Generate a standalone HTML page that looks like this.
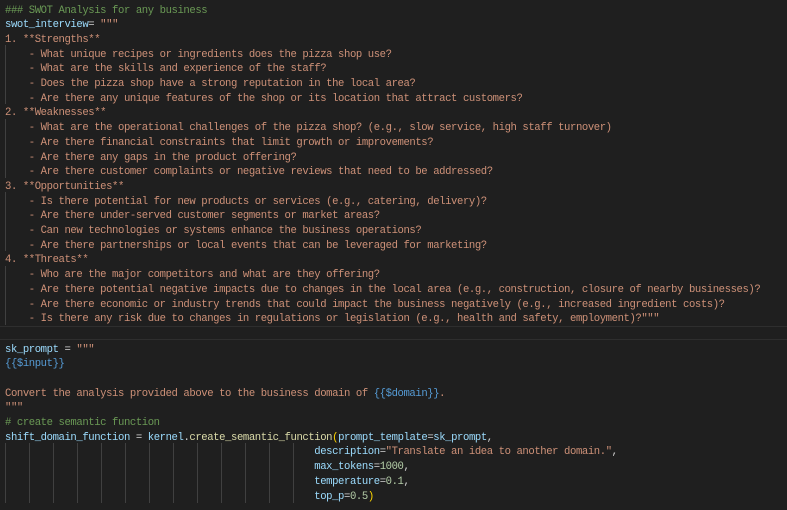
<!DOCTYPE html>
<html><head><meta charset="utf-8"><style>
body{margin:0;width:787px;height:510px;background:#1f1f1f;overflow:hidden;position:relative;font-family:"Liberation Mono",monospace;font-size:10.6px;letter-spacing:-0.41px}
.l{position:absolute;left:5px;white-space:pre;height:14px;line-height:14px;color:#ce9178;margin-top:1.5px}
.c{color:#6a9955}.v{color:#9cdcfe}.w{color:#d4d4d4}.b{color:#569cd6}.y{color:#ffd700}.f{color:#dcdcaa}.n{color:#b5cea8}
.g{position:absolute;width:1px;background:#404040}
.h{position:absolute;left:0;width:787px;height:1px;background:#2e2e2e}
</style></head><body>
<div class="h" style="top:326px"></div>
<div class="h" style="top:339px"></div>
<div class="g" style="left:5px;top:45px;height:59px"></div>
<div class="g" style="left:5px;top:119px;height:59px"></div>
<div class="g" style="left:5px;top:192px;height:59px"></div>
<div class="g" style="left:5px;top:266px;height:59px"></div>
<div class="g" style="left:5px;top:443px;height:60px"></div>
<div class="g" style="left:29px;top:443px;height:60px"></div>
<div class="g" style="left:53px;top:443px;height:60px"></div>
<div class="g" style="left:77px;top:443px;height:60px"></div>
<div class="g" style="left:101px;top:443px;height:60px"></div>
<div class="g" style="left:125px;top:443px;height:60px"></div>
<div class="g" style="left:149px;top:443px;height:60px"></div>
<div class="g" style="left:173px;top:443px;height:60px"></div>
<div class="g" style="left:197px;top:443px;height:60px"></div>
<div class="g" style="left:221px;top:443px;height:60px"></div>
<div class="g" style="left:245px;top:443px;height:60px"></div>
<div class="g" style="left:269px;top:443px;height:60px"></div>
<div class="g" style="left:293px;top:443px;height:60px"></div>

<div class="l c" style="top:2px">### SWOT Analysis for any business</div>
<div class="l" style="top:16.7px"><span class="v">swot_interview</span><span class="w">= </span>"""</div>
<div class="l" style="top:31.4px">1. **Strengths**</div>
<div class="l" style="top:46.1px">    - What unique recipes or ingredients does the pizza shop use?</div>
<div class="l" style="top:60.8px">    - What are the skills and experience of the staff?</div>
<div class="l" style="top:75.5px">    - Does the pizza shop have a strong reputation in the local area?</div>
<div class="l" style="top:90.2px">    - Are there any unique features of the shop or its location that attract customers?</div>
<div class="l" style="top:104.9px">2. **Weaknesses**</div>
<div class="l" style="top:119.6px">    - What are the operational challenges of the pizza shop? (e.g., slow service, high staff turnover)</div>
<div class="l" style="top:134.3px">    - Are there financial constraints that limit growth or improvements?</div>
<div class="l" style="top:149px">    - Are there any gaps in the product offering?</div>
<div class="l" style="top:163.7px">    - Are there customer complaints or negative reviews that need to be addressed?</div>
<div class="l" style="top:178.4px">3. **Opportunities**</div>
<div class="l" style="top:193.1px">    - Is there potential for new products or services (e.g., catering, delivery)?</div>
<div class="l" style="top:207.8px">    - Are there under-served customer segments or market areas?</div>
<div class="l" style="top:222.5px">    - Can new technologies or systems enhance the business operations?</div>
<div class="l" style="top:237.2px">    - Are there partnerships or local events that can be leveraged for marketing?</div>
<div class="l" style="top:251.9px">4. **Threats**</div>
<div class="l" style="top:266.6px">    - Who are the major competitors and what are they offering?</div>
<div class="l" style="top:281.3px">    - Are there potential negative impacts due to changes in the local area (e.g., construction, closure of nearby businesses)?</div>
<div class="l" style="top:296px">    - Are there economic or industry trends that could impact the business negatively (e.g., increased ingredient costs)?</div>
<div class="l" style="top:310.7px">    - Is there any risk due to changes in regulations or legislation (e.g., health and safety, employment)?"""</div>

<div class="l" style="top:341px"><span class="v">sk_prompt</span><span class="w"> = </span>"""</div>
<div class="l b" style="top:355.7px">{{$input}}</div>
<div class="l" style="top:385.1px">Convert the analysis provided above to the business domain of <span class="b">{{$domain}}</span>.</div>
<div class="l" style="top:399.8px">"""</div>
<div class="l c" style="top:414.5px"># create semantic function</div>
<div class="l" style="top:429.2px"><span class="v">shift_domain_function</span><span class="w"> = </span><span class="v">kernel</span><span class="w">.</span><span class="f">create_semantic_function</span><span class="y">(</span><span class="v">prompt_template</span><span class="w">=</span><span class="v">sk_prompt</span><span class="w">,</span></div>
<div class="l" style="top:443.9px">                                                    <span class="v">description</span><span class="w">=</span>"Translate an idea to another domain."<span class="w">,</span></div>
<div class="l" style="top:458.6px">                                                    <span class="v">max_tokens</span><span class="w">=</span><span class="n">1000</span><span class="w">,</span></div>
<div class="l" style="top:473.3px">                                                    <span class="v">temperature</span><span class="w">=</span><span class="n">0.1</span><span class="w">,</span></div>
<div class="l" style="top:488px">                                                    <span class="v">top_p</span><span class="w">=</span><span class="n">0.5</span><span class="y">)</span></div>
</body></html>
